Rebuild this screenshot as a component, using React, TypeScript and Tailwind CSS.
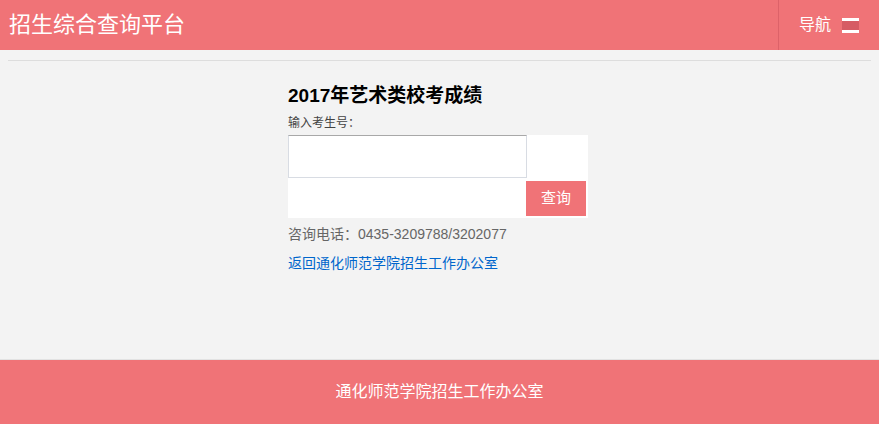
const cjk = "font-['Liberation_Sans','Noto_Sans_CJK_SC',sans-serif]"

const NavIcon = () => (
  <span className="flex h-[15px] w-[17px] flex-col">
    <span className="h-[3px] bg-white" />
    <span className="h-[9px] bg-[#d65c64]" />
    <span className="h-[3px] bg-white" />
  </span>
)

export default function App() {
  return (
    <div className={`${cjk} w-full`}>
      {/* top bar */}
      <header className="flex h-[50px] items-stretch justify-between bg-[#f07377] text-white">
        <h1 className="pl-[9px] text-[22px] leading-[50px] font-normal">招生综合查询平台</h1>
        <div className="flex items-center gap-[11px] border-l border-[#dd6269] pl-[20px] pr-[20px]">
          <span className="text-[16px]">导航</span>
          <NavIcon />
        </div>
      </header>

      <main className="h-[309px] bg-[#f3f3f3] px-2 pt-[10px]">
        <div className="border-t border-[#dddddd]" />
        <div className="flex justify-center pr-[3px] pt-[23px]">
          <div className="w-[300px]">
            <h2 className="text-[19px] leading-[24px] font-bold text-black">2017年艺术类校考成绩</h2>
            <label className="mt-[6px] block text-[12px] leading-[18px] text-[#444]">输入考生号：</label>
            <div className="mt-[3px] flex flex-col bg-white pb-[2px]">
              <input
                className="h-[43px] w-[239px] border border-[#d8dce3] border-t-[#a8a8a8] bg-white px-2 text-[14px] outline-none"
                type="text"
              />
              <button className="mt-[3px] ml-[238px] h-[35px] w-[60px] bg-[#f07377] text-[15px] text-white">
                查询
              </button>
            </div>
            <p className="mt-[6px] text-[14px] leading-[20px] text-[#666]">咨询电话：0435-3209788/3202077</p>
            <a href="#" className="mt-[9px] block text-[14px] leading-[20px] text-[#0066cc]">
              返回通化师范学院招生工作办公室
            </a>
          </div>
        </div>
      </main>

      <footer className="flex h-[65px] items-center justify-center border-t border-[#e2e2e2] bg-[#f07377] text-[16px] text-white">
        通化师范学院招生工作办公室
      </footer>
    </div>
  )
}
